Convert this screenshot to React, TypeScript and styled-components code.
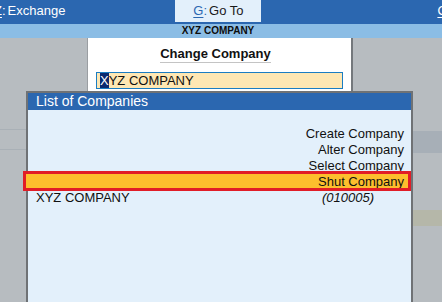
import React from "react";
import styled, { createGlobalStyle } from "styled-components";

const GlobalStyle = createGlobalStyle`
  html, body {
    margin: 0;
    padding: 0;
    width: 442px;
    height: 302px;
    overflow: hidden;
    background: #b7bcc0;
    font-family: "Liberation Sans", Arial, sans-serif;
  }
`;

const Screen = styled.div`
  width: 442px;
  height: 302px;
  display: flex;
  flex-direction: column;
  overflow: hidden;
`;

const TopBar = styled.div`
  height: 24px;
  flex: none;
  display: flex;
  align-items: flex-start;
  background: #2b67b0;
  color: #ffffff;
  font-size: 13px;
  white-space: nowrap;
`;

type MenuItemProps = {
  active?: boolean;
  width?: number;
  offset?: number;
};

const MenuItem = styled.div<MenuItemProps>`
  flex: none;
  height: 22px;
  line-height: 22px;
  display: flex;
  justify-content: ${(p) => (p.active ? "center" : "flex-start")};
  width: ${(p) => (p.width ? `${p.width}px` : "auto")};
  margin-left: ${(p) => p.offset ?? 0}px;
  background: ${(p) => (p.active ? "#e3f0fb" : "transparent")};
  color: ${(p) => (p.active ? "#1a1a1a" : "#ffffff")};
`;

const Key = styled.span<{ active?: boolean }>`
  text-decoration: underline;
  text-underline-offset: 2px;
  color: ${(p) => (p.active ? "#2b67b0" : "#ffffff")};
`;

const Colon = styled.span<{ active?: boolean }>`
  color: ${(p) => (p.active ? "#2b67b0" : "#ffffff")};
`;

const Label = styled.span`
  margin-left: 2px;
`;

const CompanyBar = styled.div`
  height: 14px;
  flex: none;
  background: #8bbde5;
  color: #0d0d0d;
  font-size: 10px;
  font-weight: bold;
  line-height: 14px;
  text-align: center;
  padding-right: 6px;
`;

const Body = styled.div`
  position: relative;
  flex: 1;
`;

const Backdrop = styled.div`
  display: flex;
  height: 100%;
`;

const LeftPane = styled.div`
  width: 200px;
  display: flex;
  flex-direction: column;
`;

const RightPane = styled.div`
  flex: 1;
  display: flex;
  flex-direction: column;
`;

type BandProps = {
  top: number;
  height: number;
  color: string;
};

const Band = styled.div<BandProps>`
  margin-top: ${(p) => p.top}px;
  height: ${(p) => p.height}px;
  background: ${(p) => p.color};
`;

const ChangePanel = styled.div`
  position: absolute;
  left: 87px;
  top: 0;
  width: 266px;
  height: 120px;
  background: #ffffff;
  border-left: 1px solid #9a9ea2;
  border-right: 2px solid #74787c;
  padding: 8px 8px 0;
  box-sizing: border-box;
  display: flex;
  flex-direction: column;
`;

const TitleRow = styled.div`
  display: flex;
  justify-content: center;
  padding-right: 8px;
`;

const Title = styled.div`
  font-size: 13px;
  font-weight: bold;
  line-height: 16px;
  color: #111111;
  border-bottom: 1px solid #c4c4c4;
`;

const Input = styled.div`
  margin-top: 9px;
  height: 17px;
  box-sizing: border-box;
  border: 1px solid #1b7dc2;
  background: #fee7b3;
  font-size: 13px;
  line-height: 15px;
  padding-left: 3px;
  color: #111111;
  white-space: nowrap;
`;

const Caret = styled.span`
  background: #0b2a6f;
  color: #ffffff;
`;

const ListPanel = styled.div`
  position: absolute;
  left: 26px;
  top: 53px;
  width: 387px;
  bottom: -4px;
  box-sizing: border-box;
  border: 2px solid #6f7275;
  background: #e3f0fb;
  font-size: 13px;
  color: #111111;
`;

const ListHeader = styled.div`
  height: 17px;
  line-height: 17px;
  background: #2b67b0;
  color: #ffffff;
  font-size: 14px;
  padding-left: 8px;
`;

const ListBody = styled.div`
  padding-top: 16px;
  display: flex;
  flex-direction: column;
`;

const ActionRow = styled.div<{ selected?: boolean }>`
  position: relative;
  height: 16px;
  line-height: 16px;
  text-align: right;
  padding-right: 7px;
  margin-left: ${(p) => (p.selected ? "-2px" : "0")};
  background: ${(p) => (p.selected ? "#fdbf2d" : "transparent")};

  &::after {
    content: "";
    display: ${(p) => (p.selected ? "block" : "none")};
    position: absolute;
    left: -3px;
    right: 0;
    top: -3px;
    bottom: -1px;
    border: 3px solid #e11d27;
  }
`;

const CompanyRow = styled.div`
  height: 16px;
  line-height: 16px;
  display: flex;
  justify-content: space-between;
  padding: 0 37px 0 8px;
`;

const Code = styled.span`
  font-style: italic;
`;

const actions = ["Create Company", "Alter Company", "Select Company", "Shut Company"];

export default function App() {
  return (
    <Screen>
      <GlobalStyle />
      <TopBar>
        <MenuItem offset={-6}>
          <Key>Z</Key>
          <Colon>:</Colon>
          <Label>Exchange</Label>
        </MenuItem>
        <MenuItem active width={86} offset={110}>
          <Key active>G</Key>
          <Colon active>:</Colon>
          <Label>Go To</Label>
        </MenuItem>
        <MenuItem offset={176}>
          <Key>O</Key>
          <Colon>:</Colon>
          <Label>Import</Label>
        </MenuItem>
      </TopBar>
      <CompanyBar>XYZ COMPANY</CompanyBar>
      <Body>
        <Backdrop>
          <LeftPane>
            <Band top={91} height={1} color="#a9b0b6" />
            <Band top={19} height={1} color="#a9b0b6" />
          </LeftPane>
          <RightPane>
            <Band top={93} height={22} color="#a7afb7" />
            <Band top={57} height={16} color="#b5b7a9" />
          </RightPane>
        </Backdrop>
        <ChangePanel>
          <TitleRow>
            <Title>Change Company</Title>
          </TitleRow>
          <Input>
            <Caret>X</Caret>YZ COMPANY
          </Input>
        </ChangePanel>
        <ListPanel>
          <ListHeader>List of Companies</ListHeader>
          <ListBody>
            {actions.map((a) => (
              <ActionRow key={a} selected={a === "Shut Company"}>
                {a}
              </ActionRow>
            ))}
            <CompanyRow>
              <span>XYZ COMPANY</span>
              <Code>(010005)</Code>
            </CompanyRow>
          </ListBody>
        </ListPanel>
      </Body>
    </Screen>
  );
}
